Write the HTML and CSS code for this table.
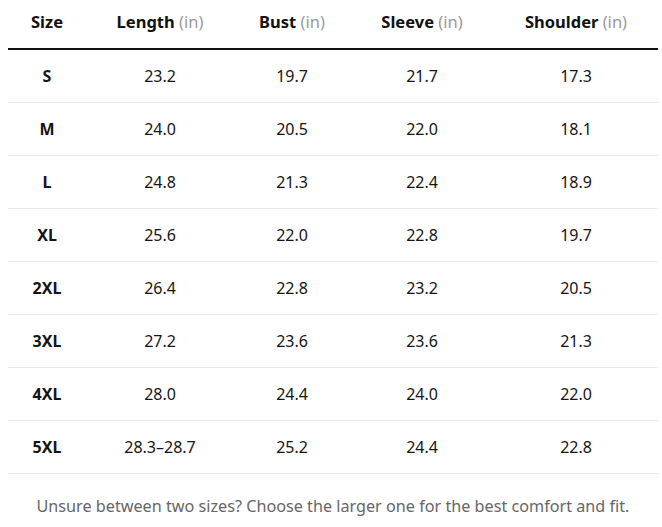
FILE: index.html
```html
<!DOCTYPE html>
<html lang="en">
<head>
<meta charset="utf-8">
<title>Size chart</title>
<link rel="stylesheet" href="styles.css">
</head>
<body>
<div class="chart">
  <table class="size-table">
    <colgroup>
      <col class="c-size">
      <col class="c-length">
      <col class="c-bust">
      <col class="c-sleeve">
      <col class="c-shoulder">
    </colgroup>
    <thead>
      <tr>
        <th>Size</th>
        <th>Length <span class="unit">(in)</span></th>
        <th>Bust <span class="unit">(in)</span></th>
        <th>Sleeve <span class="unit">(in)</span></th>
        <th>Shoulder <span class="unit">(in)</span></th>
      </tr>
    </thead>
    <tbody>
      <tr><td class="size">S</td><td>23.2</td><td>19.7</td><td>21.7</td><td>17.3</td></tr>
      <tr><td class="size">M</td><td>24.0</td><td>20.5</td><td>22.0</td><td>18.1</td></tr>
      <tr><td class="size">L</td><td>24.8</td><td>21.3</td><td>22.4</td><td>18.9</td></tr>
      <tr><td class="size">XL</td><td>25.6</td><td>22.0</td><td>22.8</td><td>19.7</td></tr>
      <tr><td class="size">2XL</td><td>26.4</td><td>22.8</td><td>23.2</td><td>20.5</td></tr>
      <tr><td class="size">3XL</td><td>27.2</td><td>23.6</td><td>23.6</td><td>21.3</td></tr>
      <tr><td class="size">4XL</td><td>28.0</td><td>24.4</td><td>24.0</td><td>22.0</td></tr>
      <tr><td class="size">5XL</td><td>28.3–28.7</td><td>25.2</td><td>24.4</td><td>22.8</td></tr>
    </tbody>
  </table>
  <p class="note">Unsure between two sizes? Choose the larger one for the best comfort and fit.</p>
</div>
</body>
</html>
```

FILE: styles.css
```css
html, body {
  margin: 0;
  padding: 0;
  background: #ffffff;
}
body {
  font-family: "Noto Sans", "Open Sans", sans-serif;
  color: #111111;
}
.chart {
  padding: 0 8px;
  width: 650px;
}
.size-table {
  width: 650px;
  border-collapse: collapse;
  table-layout: fixed;
}
.c-size { width: 78px; }
.c-length { width: 148px; }
.c-bust { width: 116px; }
.c-sleeve { width: 144px; }
.c-shoulder { width: 164px; }
.size-table th {
  font-size: 16.5px;
  font-weight: 700;
  line-height: 22px;
  height: 22px;
  padding: 11px 0 15px;
  text-align: center;
  border-bottom: 2px solid #111111;
  color: #111111;
}
.unit {
  font-weight: 400;
  color: #9a9a9a;
}
.size-table td {
  font-size: 16px;
  line-height: 22px;
  height: 52px;
  padding: 0;
  text-align: center;
  vertical-align: middle;
  border-bottom: 1px solid #ebebeb;
  color: #151515;
}
.size-table td.size {
  font-weight: 700;
}
.note {
  margin: 0;
  padding: 21px 0 0;
  font-size: 16.2px;
  line-height: 22px;
  text-align: center;
  color: #666666;
}
```
